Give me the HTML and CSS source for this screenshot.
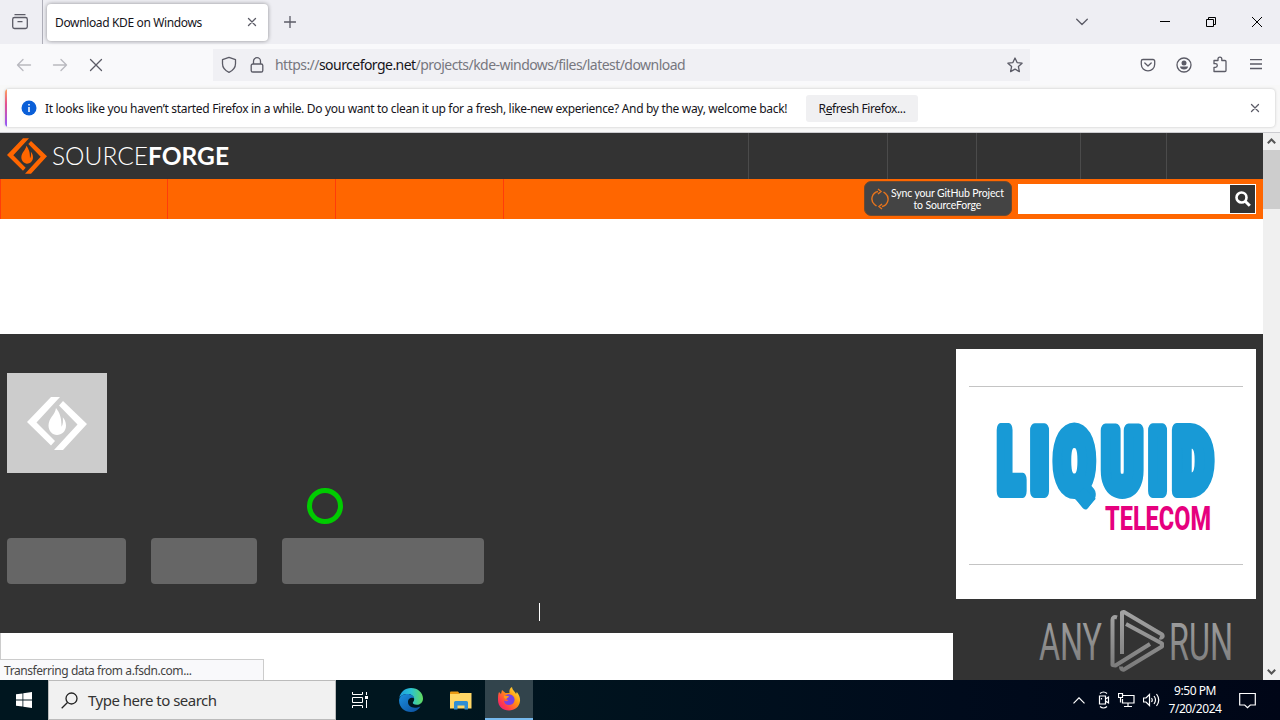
FILE: index.html
```
<!DOCTYPE html>
<html lang="en">
<head>
    <meta charset="UTF-8">
    <meta name="viewport" content="width=device-width, initial-scale=1.0">
    <title>Download KDE on Windows</title>
    <link rel="stylesheet" href="styles.css">
</head>
<body>

    <!-- Tabs -->
    <div class="tab-bar">
        <div class="firefox-view">
            <svg width="18" height="18" viewBox="0 0 18 18" class="icon"><path d="M4 1.700h10M3.500 4.500h11a1.800 1.800 0 0 1 1.800 1.800v7.400a1.800 1.800 0 0 1-1.800 1.800h-11a1.800 1.800 0 0 1-1.800-1.800V6.300a1.800 1.800 0 0 1 1.800-1.800zM7 8.700h4"/></svg>
        </div>
        <div class="tab">
            <span class="tab-title">Download KDE on Windows</span>
            <svg width="10" height="10" viewBox="0 0 10 10" class="icon"><path d="M1.500 1.500l7 7M8.500 1.500l-7 7"/></svg>
        </div>
        <svg width="12" height="12" viewBox="0 0 12 12" class="icon new-tab"><path d="M6 .3v11.400M.3 6h11.400"/></svg>
        <div class="window-buttons">
            <svg width="12" height="8" viewBox="0 0 12 8" class="icon list-tabs"><path d="M.7 1.200L6 6.500l5.300-5.300"/></svg>
            <svg width="10" height="10" viewBox="0 0 10 10" class="win"><path d="M0 4.500h10"/></svg>
            <svg width="10" height="10" viewBox="0 0 10 10" class="win"><path d="M.5 2.500h7v7h-7zM2.500 2.500v-2h7v7h-2"/></svg>
            <svg width="10" height="10" viewBox="0 0 10 10" class="win"><path d="M0 0l10 10M10 0L0 10"/></svg>
        </div>
    </div>

    <!-- Navigation -->
    <div class="nav-bar">
        <div class="nav-buttons">
            <svg width="16" height="14" viewBox="0 0 16 14" class="icon disabled"><path d="M14.500 7H1.500M7 1.500L1.500 7 7 12.500"/></svg>
            <svg width="16" height="14" viewBox="0 0 16 14" class="icon disabled"><path d="M1.500 7h13M9 1.500L14.500 7 9 12.500"/></svg>
            <svg width="14" height="14" viewBox="0 0 14 14" class="icon stop"><path d="M1.500 1.500l11 11M12.500 1.500l-11 11"/></svg>
        </div>
        <div class="url-bar">
            <svg width="16" height="18" viewBox="0 0 16 18" class="icon shield"><path d="M8 1.300l6.500 2.400v4c0 3.800-2.800 6.800-6.500 8.600C4.300 14.500 1.500 11.500 1.500 7.700v-4z"/></svg>
            <svg width="14" height="16" viewBox="0 0 14 16" class="icon lock"><path d="M3.500 7V4.200a3.500 3.500 0 0 1 7 0V7M2.800 7h8.400a1.600 1.600 0 0 1 1.600 1.600v4.800a1.600 1.600 0 0 1-1.600 1.600H2.800a1.600 1.600 0 0 1-1.600-1.600V8.600A1.600 1.600 0 0 1 2.800 7z"/></svg>
            <span class="url">https://<b>sourceforge.net</b>/projects/kde-windows/files/latest/download</span>
            <svg width="16" height="16" viewBox="0 0 16 16" class="icon star"><path d="M8 1l2.100 4.600 5 .6-3.700 3.400 1 5L8 12.100l-4.400 2.500 1-5L.9 6.200l5-.6z"/></svg>
        </div>
        <div class="nav-tools">
            <svg width="16" height="14" viewBox="0 0 16 14" class="icon"><path d="M3 1.500h10a1.700 1.700 0 0 1 1.700 1.700v3a6.700 6.700 0 0 1-13.400 0v-3A1.700 1.700 0 0 1 3 1.500zM4.800 5L8 8l3.200-3"/></svg>
            <svg width="16" height="16" viewBox="0 0 16 16" class="icon"><circle cx="8" cy="8" r="7"/><circle cx="8" cy="5.900" r="2.500" class="solid"/><path class="solid" d="M4 9.500h8c0 4-8 4-8 0z"/></svg>
            <svg width="16" height="17" viewBox="0 0 16 17" class="icon"><path d="M2 15.500V11.300h1.500a1.800 1.800 0 0 0 0-3.600H2V4.500h4V3a1.900 1.900 0 0 1 3.800 0v1.500H13a1 1 0 0 1 1 1v9a1 1 0 0 1-1 1z"/></svg>
            <svg width="14" height="12" viewBox="0 0 14 12" class="icon menu"><path d="M1 .5h12M1 5h12M1 9.500h12"/></svg>
        </div>
    </div>

    <!-- Notification -->
    <div class="notice-wrap">
        <div class="notice">
            <svg width="16" height="16" viewBox="0 0 16 16" class="info"><circle cx="8" cy="8" r="7.500" fill="#0a5fd8"/><path d="M8 7v5M8 4v1.500" stroke="#fff" stroke-width="1.500"/></svg>
            <span class="notice-text">It looks like you haven’t started Firefox in a while. Do you want to clean it up for a fresh, like-new experience? And by the way, welcome back!</span>
            <button class="refresh-btn">R<u>e</u>fresh Firefox...</button>
            <svg width="10" height="10" viewBox="0 0 10 10" class="icon notice-close"><path d="M1.500 1.500l7 7M8.500 1.500l-7 7"/></svg>
        </div>
    </div>

    <!-- Page -->
    <div class="viewport">
        <div class="page">
            <div class="site-header">
                <svg width="40" height="36" viewBox="0 0 60 53" fill="#f60">
                    <g id="mark">
                        <path d="M24 0h9L9.500 25.500 28 44l-4 4.500L0 25z"/>
                        <path d="M36 4l24 23-24 26h-9l23.500-25.500L32 8.500z"/>
                        <path d="M29 11c-1 7-7.500 10-7.500 17.500 0 5.500 4 9.500 8.500 9.500s9-3.500 9-9.500c0-4-1.700-6.700-3.200-8.300.4 4 .2 7.500-1.300 9.500C34.500 21 33 16 29 11z"/>
                    </g>
                </svg>
                <svg width="190" height="40" viewBox="0 0 190 40" class="logo">
                    <text x="5" y="26.500" class="logo-light" textLength="96" lengthAdjust="spacingAndGlyphs">SOURCE</text>
                    <text x="101" y="26.500" class="logo-bold" textLength="81" lengthAdjust="spacingAndGlyphs">FORGE</text>
                </svg>
                <div class="header-links">
                    <span class="w139"></span><span class="w89"></span><span class="w104"></span><span class="w86"></span><span class="w97"></span>
                </div>
            </div>
            <div class="site-nav">
                <span class="nav-item"></span><span class="nav-item"></span><span class="nav-item"></span><span class="nav-item"></span>
                <div class="github-sync">
                    <svg width="18" height="22" viewBox="0 0 18 22"><path d="M7 3.500a7.500 7.500 0 0 0-3.500 13M11 18.500a7.500 7.500 0 0 0 3.500-13M7 1l3 2.500-3 2.500M11 21l-3-2.500 3-2.500M3.500 16.500l2 1.500M14.500 5.500l-2-1.500" fill="none" stroke="#e8741c" stroke-width="1.400"/></svg>
                    <span>Sync your GitHub Project<br>to SourceForge</span>
                </div>
                <div class="search">
                    <div class="search-btn">
                        <svg width="16" height="16" viewBox="0 0 16 16"><circle cx="6.500" cy="6.500" r="5" fill="none" stroke="#fff" stroke-width="2.600"/><path d="M10.200 10.200l4.600 4.600" stroke="#fff" stroke-width="3"/></svg>
                    </div>
                </div>
            </div>
            <div class="ad-space"></div>
            <div class="project">
                <div class="project-main">
                    <div class="project-info">
                        <div class="project-icon">
                            <svg width="60" height="53" viewBox="0 0 60 53" fill="#fff"><use href="#mark"/></svg>
                        </div>
                        <div class="project-tabs">
                            <span class="w119"></span><span class="w106"></span><span class="w202"></span>
                        </div>
                    </div>
                    <div class="project-body"></div>
                </div>
                <div class="project-side">
                    <div class="ad">
                        <svg width="300" height="250" viewBox="0 0 300 250">
                            <path d="M13 37.500h274M13 215.500h274" stroke="#c4c4c4"/>
                            <g class="liquid">
                                <text transform="translate(42 142) scale(.55 1)">L</text>
                                <text transform="translate(75 142) scale(.66 1)">I</text>
                                <text transform="translate(99 142) scale(.65 1)">Q</text>
                                <text transform="translate(146.500 142) scale(.69 1)">U</text>
                                <text transform="translate(193 142) scale(.66 1)">I</text>
                                <text transform="translate(217.500 142) scale(.69 1)">D</text>
                                <path d="M123 144l12 11" class="tail"/>
                            </g>
                            <text x="149" y="181" class="telecom" textLength="106" lengthAdjust="spacingAndGlyphs">TELECOM</text>
                        </svg>
                    </div>
                    <svg width="204" height="66" viewBox="0 0 204 66" class="watermark">
                        <defs>
                            <linearGradient id="grey" x1="0" y1="0" x2="0" y2="66" gradientUnits="userSpaceOnUse">
                                <stop offset="0" stop-color="#a6a6a6"/><stop offset="1" stop-color="#777"/>
                            </linearGradient>
                        </defs>
                        <text x="0" y="51.500" textLength="63" lengthAdjust="spacingAndGlyphs">ANY</text>
                        <path d="M78 9.500c-3-1-4.500 0-4.500 2.500v45l3 .5L111 36M83 46V4.500l2-.5 38 22.500c1.500 2 0 4-2.500 3M87 16l36 19.500v3L85 61.500c-2 .5-3-.5-3-3"/>
                        <text x="130" y="51.500" textLength="64" lengthAdjust="spacingAndGlyphs">RUN</text>
                    </svg>
                </div>
            </div>
        </div>
        <div class="scrollbar">
            <svg width="9" height="6" viewBox="0 0 9 6"><path d="M.8 5.200l3.700-3.700 3.700 3.700"/></svg>
            <div class="thumb"></div>
            <svg width="9" height="6" viewBox="0 0 9 6"><path d="M.8.8l3.700 3.700L8.200.8"/></svg>
        </div>

        <div class="status">Transferring data from a.fsdn.com...</div>
        <div class="click-ring"></div>
        <div class="caret"></div>
    </div>

    <!-- Taskbar -->
    <div class="taskbar">
        <div class="start">
            <svg width="16" height="16" viewBox="0 0 16 16" fill="#fff"><path d="M0 2.300l6.500-.9v6.200H0zM7.300 1.300L16 0v7.600H7.300zM0 8.400h6.500v6.200L0 13.700zM7.300 8.400H16V16l-8.700-1.300z"/></svg>
        </div>
        <div class="task-search">
            <svg width="17" height="17" viewBox="0 0 17 17"><circle cx="10.500" cy="6.500" r="5.500"/><path d="M6.500 10.500L.7 16.300"/></svg>
            <span>Type here to search</span>
        </div>
        <div class="task-app">
            <svg width="17" height="16" viewBox="0 0 17 16" fill="none" stroke="#fff"><path d="M.5 0v2.500h10V0M.5 16v-2.500h10V16M.5 5.500h10v5H.5zM14.500 0v3M14.500 8v8"/><path d="M13 4h3v3h-3z" fill="#fff" stroke="none"/></svg>
        </div>
        <div class="task-app edge">
            <svg width="24" height="24" viewBox="0 0 24 24">
                <defs>
                    <linearGradient id="edgeTop" x1="0" y1="0" x2="1" y2="0"><stop offset="0" stop-color="#1c9de0"/><stop offset=".5" stop-color="#2bc3d2"/><stop offset="1" stop-color="#62dc5c"/></linearGradient>
                    <linearGradient id="edgeLow" x1="0" y1="0" x2="1" y2="1"><stop offset="0" stop-color="#1b8fdf"/><stop offset="1" stop-color="#0c4d9c"/></linearGradient>
                </defs>
                <path fill="url(#edgeTop)" d="M.3 10C1.300 4 6 0 12 0c7 0 12 5 12 10.500 0 4-3 6.300-6.200 6.300-3 0-4-1.200-4-2 0-.9 1.400-1.300 1.400-3.800C15 8 12 6 8.500 6 4 6 1 8.500.3 10z"/>
                <path fill="url(#edgeLow)" d="M.1 12C.5 8 4.500 6 8.500 6c3.600 0 6.500 2.200 6.700 4.500C14 9 9 9.500 9 14c0 4.500 5 7.500 12.500 4.500C19.500 22 16 24 12 24 5.500 24-.3 19 .1 12z"/>
            </svg>
        </div>
        <div class="task-app">
            <svg width="22" height="19" viewBox="0 0 22 19"><path fill="#e99a14" d="M0 1.500Q0 .5 1 .5h7l2 2.500H0z"/><path fill="#ffd766" d="M0 3h9l1-1h11.500v15.500H0z"/><path fill="#2f8fd5" d="M4 11.500q0-1.500 1.500-1.500h11q1.500 0 1.500 1.500v7h-3.500v-4h-7v4H4z"/></svg>
        </div>
        <div class="task-app active">
            <svg width="24" height="24" viewBox="0 0 24 24">
                <defs>
                    <linearGradient id="fox" x1="1" y1="0" x2="0" y2="1"><stop offset="0" stop-color="#fff44f"/><stop offset=".4" stop-color="#ff980e"/><stop offset=".75" stop-color="#ff3750"/><stop offset="1" stop-color="#e31587"/></linearGradient>
                </defs>
                <path fill="url(#fox)" d="M2 5l2 2 1-4 3.500 3h4C12 3 13 1 15 0c.5 3.500 3 4 4 7l.8-2c2.500 3 3.500 6 3.200 9-.6 6-5.500 9.500-11 9.500C6 23.500 1 19.500 1 13c0-3 0-6 1-8z"/>
                <path fill="#7542e5" d="M8 9c1-1.500 4-2 5-1.500 3 .5 5 3 4.500 6-.4 3-3 4.500-5.500 4.500-3 0-5-2-5-4.500 1.500 1 3 1 4.500-.5-2-.3-3.500-1-3.500-4z"/>
                <path fill="#ff9a17" d="M7 8.500c2 .5 3.500.2 5 .8-.3 1.500-2.500 1.500-2.500 2.700-2 0-3-1.500-2.500-3.500z"/>
            </svg>
        </div>
        <div class="tray">
            <svg width="12" height="7" viewBox="0 0 12 7" class="tray-more"><path d="M.5 6.300L6 .8l5.500 5.500"/></svg>
            <svg width="12" height="18" viewBox="0 0 12 18"><path d="M2 2.500Q5.500-.5 9 2.500M2 15.500q3.500 3 7 0M1.500 5h6v8h-6zM7.500 8l3-2v6l-3-2M3.500 7v1.500"/></svg>
            <svg width="17" height="14" viewBox="0 0 17 14"><path d="M5 2.500h11v7.500H4.500V6M10 10v3M6 13.500h8M.5.500h4v4h-4zM2.500 4.500v5"/></svg>
            <svg width="17" height="14" viewBox="0 0 17 14"><path d="M.5 5h2.500l3.500-3.500v11L3 9H.5zM8.500 5q1.500 2 0 4M11 3q3 4 0 8M13.500 1q4.500 6 0 12"/></svg>
            <div class="clock">9:50 PM<br>7/20/2024</div>
            <svg width="17" height="17" viewBox="0 0 17 17" class="action"><path d="M.7 1.500h15.600v11.500h-5L8.500 15.700 5.700 13h-5z"/></svg>
        </div>
    </div>

</body>
</html>
```
FILE: styles.css
```
* {
    margin: 0;
    padding: 0;
    box-sizing: border-box;
}

body {
    width: 1280px;
    height: 720px;
    overflow: hidden;
    font-family: "Noto Sans", sans-serif;
    font-size: 12px;
    color: #15141a;
    background: #fff;
    white-space: nowrap;
}

svg {
    display: block;
    flex: none;
}

.icon {
    fill: none;
    stroke: #5b5b66;
    stroke-width: 1.3;
    stroke-linecap: round;
    stroke-linejoin: round;
}

/* Tabs */
.tab-bar {
    display: flex;
    align-items: center;
    height: 44px;
    background: #eeeef3;
}

.firefox-view {
    display: flex;
    align-items: center;
    width: 43px;
    height: 44px;
    padding-left: 11px;
    border-right: 1px solid #aeaeb8;
}

.tab {
    display: flex;
    align-items: center;
    justify-content: space-between;
    width: 221px;
    height: 37px;
    margin-left: 4px;
    padding: 0 11px 0 8px;
    background: #fff;
    border-radius: 4px;
    box-shadow: 0 0 4px rgba(0, 0, 0, 0.4);
}

.tab-title {
    letter-spacing: -0.36px;
}

.new-tab {
    margin-left: 16px;
}

.window-buttons {
    display: flex;
    align-items: center;
    gap: 36px;
    margin-left: auto;
    padding-right: 18px;
}

.list-tabs {
    margin-right: 36px;
}

.win {
    fill: none;
    stroke: #000;
    stroke-width: 1;
}

/* Navigation */
.nav-bar {
    display: flex;
    align-items: center;
    height: 41px;
    background: #f9f9fb;
}

.nav-buttons {
    display: flex;
    align-items: center;
    gap: 20px;
    width: 213px;
    padding-left: 16px;
}

.stop {
    margin-left: 1px;
}

.disabled {
    opacity: 0.4;
}

.url-bar {
    display: flex;
    align-items: center;
    width: 817px;
    height: 32px;
    padding: 0 7px 0 8px;
    background: #f0f0f4;
}

.lock {
    margin-left: 13px;
}

.url {
    margin-left: 11px;
    font-size: 14px;
    letter-spacing: -0.54px;
    color: #77777f;
}

.url b {
    font-weight: normal;
    color: #15141a;
}

.star {
    margin-left: auto;
}

.nav-tools {
    display: flex;
    align-items: center;
    gap: 20px;
    margin-left: 110px;
}

.solid {
    fill: #5b5b66;
    stroke: none;
}

.menu {
    margin-left: 1px;
    stroke-linecap: butt;
}

/* Notification */
.notice-wrap {
    height: 48px;
    padding: 4px 5px;
    background: #f8f8f8;
    border-bottom: 1px solid #ccccd0;
}

.notice {
    display: flex;
    align-items: center;
    height: 38px;
    padding-left: 14px;
    padding-right: 15px;
    background: linear-gradient(#ffa45c, #e44f91 40%, #9059ff) 0 0 / 2px 100% no-repeat, #fff;
    border-radius: 4px;
    box-shadow: 0 0 3px rgba(0, 0, 0, 0.22);
}

.info {
    margin-left: 2px;
}

.notice-text {
    width: 761px;
    margin-left: 8px;
    letter-spacing: -0.32px;
}

.refresh-btn {
    width: 112px;
    height: 27px;
    font: inherit;
    letter-spacing: -0.4px;
    color: inherit;
    background: #f0f0f2;
    border: none;
    border-radius: 3px;
}

.notice-close {
    margin-left: auto;
}

/* Page */
.viewport {
    position: relative;
    display: flex;
    height: 547px;
    overflow: hidden;
}

.page {
    width: 1263px;
}

.site-header {
    display: flex;
    height: 46px;
    padding: 5px 0 0 7px;
    background: #333;
}

.logo-light,
.logo-bold {
    font-family: Lato, sans-serif;
    font-size: 24.5px;
    font-weight: 300;
    fill: #fff;
}

.logo-bold {
    font-weight: 700;
}

.header-links {
    display: flex;
    margin-top: -5px;
    margin-left: auto;
}

.header-links span {
    border-left: 1px solid #4b4b4b;
}

.w139 { width: 139px; }
.w89 { width: 89px; }
.w104 { width: 104px; }
.w86 { width: 86px; }
.w97 { width: 97px; }
.w119 { width: 119px; }
.w106 { width: 106px; }
.w202 { width: 202px; }

.site-nav {
    display: flex;
    align-items: center;
    height: 40px;
    padding-right: 7px;
    background: #f60;
}

.nav-item {
    width: 168px;
    height: 40px;
    border-left: 1px solid #ff3c0a;
}

.nav-item:first-child {
    width: 167px;
}

.github-sync {
    display: flex;
    align-items: center;
    width: 148px;
    height: 35px;
    margin-left: auto;
    margin-top: -1px;
    padding-left: 6px;
    font-family: Lato, sans-serif;
    font-size: 10.5px;
    line-height: 12px;
    letter-spacing: -0.15px;
    text-align: center;
    color: #fff;
    background: #444;
    border: 1px solid #6b4a30;
    border-radius: 7px;
}

.github-sync span {
    margin-left: 2px;
}

.search {
    display: flex;
    justify-content: flex-end;
    width: 238px;
    height: 30px;
    margin-left: 6px;
    padding: 1px;
    background: #fff;
}

.search-btn {
    display: flex;
    align-items: center;
    justify-content: center;
    width: 25px;
    background: #333;
}

.ad-space {
    height: 115px;
}

.project {
    display: flex;
    height: 346px;
    background: #333;
}

.project-main {
    width: 953px;
}

.project-info {
    height: 299px;
    padding: 39px 7px 0;
}

.project-icon {
    display: flex;
    align-items: center;
    justify-content: center;
    width: 100px;
    height: 100px;
    background: #ccc;
}

.project-tabs {
    display: flex;
    gap: 25px;
    margin-top: 65px;
}

.project-tabs span {
    height: 46px;
    background: #666;
    border-radius: 4px;
}

.project-body {
    height: 47px;
    background: #fff;
    border-left: 1px solid #ccc;
}

.project-side {
    padding: 15px 0 0 3px;
}

.ad {
    width: 300px;
    height: 250px;
    background: #fff;
}

.liquid {
    font-family: Roboto, sans-serif;
    font-size: 86px;
    font-weight: 900;
    fill: #189ad6;
    stroke: #189ad6;
    stroke-width: 14;
    stroke-linejoin: round;
}

.telecom {
    font-family: Roboto, sans-serif;
    font-size: 34px;
    font-weight: 800;
    fill: #e6007e;
}

.watermark {
    margin: 9px 0 0 83px;
    font-family: Roboto, sans-serif;
    font-size: 52px;
    font-weight: 400;
    fill: url(#grey);
}

.watermark path {
    fill: none;
    stroke: url(#grey);
    stroke-width: 4;
    stroke-linejoin: round;
}

.scrollbar {
    display: flex;
    flex-direction: column;
    align-items: center;
    width: 17px;
    padding: 5px 0;
    background: #f0f0f0;
}

.scrollbar path {
    fill: none;
    stroke: #555;
    stroke-width: 2;
}

.thumb {
    width: 17px;
    height: 59px;
    margin: 6px 0 auto;
    background: #cdcdcd;
}

.status {
    position: absolute;
    left: 0;
    bottom: 0;
    width: 264px;
    height: 21px;
    padding-left: 4px;
    line-height: 22px;
    letter-spacing: -0.43px;
    color: #444;
    background: #f9f9fb;
    border: 1px solid #ccc;
    border-width: 1px 1px 0 0;
}

.click-ring {
    position: absolute;
    left: 307px;
    top: 355px;
    width: 36px;
    height: 36px;
    border: 5px solid #0c0;
    border-radius: 50%;
}

.caret {
    position: absolute;
    left: 539px;
    top: 470px;
    width: 1px;
    height: 18px;
    background: #fff;
}

/* Taskbar */
.taskbar {
    display: flex;
    height: 40px;
    background: linear-gradient(90deg, #00161f 35%, #000b1c 75%, #000617);
}

.start,
.task-app {
    display: flex;
    align-items: center;
    justify-content: center;
    width: 48px;
}

.task-search {
    display: flex;
    align-items: center;
    gap: 10px;
    width: 288px;
    padding-left: 12px;
    font-size: 15px;
    letter-spacing: -0.5px;
    color: #333;
    background: #f1f1f1;
    border: 1px solid #bbb;
}

.task-search svg {
    fill: none;
    stroke: #222;
    stroke-width: 1.3;
}

.task-app.edge {
    width: 53px;
}

.active {
    background: #32444c;
    border-bottom: 2px solid #76b9ed;
}

.tray {
    display: flex;
    align-items: center;
    gap: 8px;
    margin-left: auto;
    padding-right: 24px;
    color: #fff;
}

.tray svg {
    fill: none;
    stroke: #fff;
    stroke-width: 1.2;
}

.tray .tray-more {
    margin-right: 5px;
}

.clock {
    width: 54px;
    line-height: 18px;
    letter-spacing: -0.45px;
    text-align: center;
}

.tray .action {
    margin-left: 9px;
}
```
